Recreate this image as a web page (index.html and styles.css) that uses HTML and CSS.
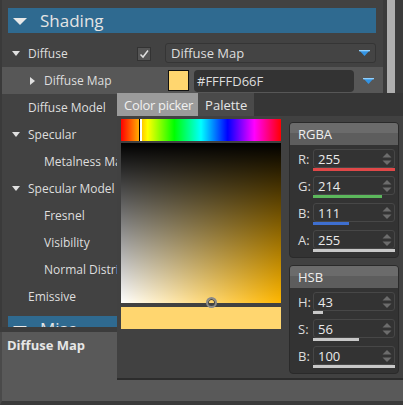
FILE: index.html
```html
<!DOCTYPE html>
<html>
<head>
<meta charset="utf-8">
<link rel="stylesheet" href="styles.css">
</head>
<body>
<div class="app">
  <div class="main">
    <div class="grid">
      <div class="section-header"><span class="tri-lg"></span>Shading</div>
      <div class="row lvl1">
        <div class="name"><span class="twisty"><span class="tri-down"></span></span><span>Diffuse</span></div>
        <div class="value">
          <span class="checkbox"><svg width="12" height="12" viewBox="0 0 12 12"><polyline points="2.5,6.5 5,9 10,2.5" fill="none" stroke="#e0e0e0" stroke-width="1.5"/></svg></span>
          <div class="dropdown"><span>Diffuse Map</span><svg class="blue-arrow" width="11" height="6" viewBox="0 0 11 6"><polygon points="0,0 11,0 5.5,6" fill="#3394e4"/><rect x="0" y="0" width="11" height="1.3" fill="#8fd0ff"/></svg></div>
        </div>
      </div>
      <div class="row lvl2 selected">
        <div class="name"><span class="twisty"><span class="tri-right"></span></span><span>Diffuse Map</span></div>
        <div class="value">
          <span class="swatch"></span>
          <div class="hexbox">#FFFFD66F</div>
          <div class="arrow-cell"><svg class="blue-arrow" width="11" height="6" viewBox="0 0 11 6"><polygon points="0,0 11,0 5.5,6" fill="#3394e4"/><rect x="0" y="0" width="11" height="1.3" fill="#8fd0ff"/></svg></div>
        </div>
      </div>
      <div class="row lvl1"><div class="name"><span class="twisty"></span><span>Diffuse Model</span></div><div class="value"></div></div>
      <div class="row lvl1"><div class="name"><span class="twisty"><span class="tri-down"></span></span><span>Specular</span></div><div class="value"></div></div>
      <div class="row lvl2"><div class="name"><span class="twisty"></span><span>Metalness Map</span></div><div class="value"></div></div>
      <div class="row lvl1"><div class="name"><span class="twisty"><span class="tri-down"></span></span><span>Specular Model</span></div><div class="value"></div></div>
      <div class="row lvl2"><div class="name"><span class="twisty"></span><span>Fresnel</span></div><div class="value"></div></div>
      <div class="row lvl2"><div class="name"><span class="twisty"></span><span>Visibility</span></div><div class="value"></div></div>
      <div class="row lvl2"><div class="name"><span class="twisty"></span><span>Normal Distribution</span></div><div class="value"></div></div>
      <div class="row lvl1"><div class="name"><span class="twisty"></span><span>Emissive</span></div><div class="value"></div></div>
      <div class="section-header next"><span class="tri-lg"></span>Misc</div>
    </div>
    <div class="scrollbar"><div class="thumb"></div></div>
  </div>
  <div class="sep"></div>
  <div class="desc">Diffuse Map</div>

  <div class="popup">
    <div class="tabs">
      <div class="tab active">Color picker</div>
      <div class="tab">Palette</div>
    </div>
    <div class="popup-body">
      <div class="picker">
        <div class="hue"><span class="hue-marker"></span></div>
        <div class="sv"><span class="sv-marker"></span></div>
        <div class="preview"></div>
      </div>
      <div class="channels">
        <div class="group">
          <div class="group-header">RGBA</div>
          <div class="group-body">
            <div class="ch"><span class="lbl">R:</span><div class="field"><div class="box"><span>255</span><svg class="spin" width="10" height="14" viewBox="0 0 10 14"><polygon points="0.5,5.5 9.5,5.5 5,1" fill="#6c6c6c"/><polygon points="0.5,8.5 9.5,8.5 5,13" fill="#6c6c6c"/></svg></div><div class="bar red" style="width:82px"></div></div></div>
            <div class="ch"><span class="lbl">G:</span><div class="field"><div class="box"><span>214</span><svg class="spin" width="10" height="14" viewBox="0 0 10 14"><polygon points="0.5,5.5 9.5,5.5 5,1" fill="#6c6c6c"/><polygon points="0.5,8.5 9.5,8.5 5,13" fill="#6c6c6c"/></svg></div><div class="bar green" style="width:69px"></div></div></div>
            <div class="ch"><span class="lbl">B:</span><div class="field"><div class="box"><span>111</span><svg class="spin" width="10" height="14" viewBox="0 0 10 14"><polygon points="0.5,5.5 9.5,5.5 5,1" fill="#6c6c6c"/><polygon points="0.5,8.5 9.5,8.5 5,13" fill="#6c6c6c"/></svg></div><div class="bar blue" style="width:36px"></div></div></div>
            <div class="ch"><span class="lbl">A:</span><div class="field"><div class="box"><span>255</span><svg class="spin" width="10" height="14" viewBox="0 0 10 14"><polygon points="0.5,5.5 9.5,5.5 5,1" fill="#6c6c6c"/><polygon points="0.5,8.5 9.5,8.5 5,13" fill="#6c6c6c"/></svg></div><div class="bar gray" style="width:82px"></div></div></div>
          </div>
        </div>
        <div class="group hsb">
          <div class="group-header">HSB</div>
          <div class="group-body">
            <div class="ch"><span class="lbl">H:</span><div class="field"><div class="box"><span>43</span><svg class="spin" width="10" height="14" viewBox="0 0 10 14"><polygon points="0.5,5.5 9.5,5.5 5,1" fill="#6c6c6c"/><polygon points="0.5,8.5 9.5,8.5 5,13" fill="#6c6c6c"/></svg></div><div class="bar gray" style="width:10px"></div></div></div>
            <div class="ch"><span class="lbl">S:</span><div class="field"><div class="box"><span>56</span><svg class="spin" width="10" height="14" viewBox="0 0 10 14"><polygon points="0.5,5.5 9.5,5.5 5,1" fill="#6c6c6c"/><polygon points="0.5,8.5 9.5,8.5 5,13" fill="#6c6c6c"/></svg></div><div class="bar gray" style="width:46px"></div></div></div>
            <div class="ch"><span class="lbl">B:</span><div class="field"><div class="box"><span>100</span><svg class="spin" width="10" height="14" viewBox="0 0 10 14"><polygon points="0.5,5.5 9.5,5.5 5,1" fill="#6c6c6c"/><polygon points="0.5,8.5 9.5,8.5 5,13" fill="#6c6c6c"/></svg></div><div class="bar gray" style="width:82px"></div></div></div>
          </div>
        </div>
      </div>
    </div>
  </div>
</div>
</body>
</html>
```

FILE: styles.css
```css
* { box-sizing: border-box; }
html, body { margin: 0; padding: 0; }
body {
  width: 403px;
  height: 405px;
  overflow: hidden;
  background: #3a3a3a;
  font-family: "Open Sans", "Noto Sans", sans-serif;
  font-size: 12px;
  color: #dedede;
}
.app {
  position: relative;
  width: 403px;
  height: 405px;
  display: flex;
  flex-direction: column;
}
.main {
  display: flex;
  height: 327px;
  overflow: hidden;
}
.grid {
  width: 383px;
  background: #424242;
  border-left: 2px solid #3a3a3a;
  overflow: hidden;
}
.section-header {
  height: 25px;
  margin: 8px 7px 7px 6px;
  background: #2f6a90;
  color: #e4e4e4;
  font-size: 17px;
  display: flex;
  align-items: center;
  padding-left: 5px;
  white-space: nowrap;
}
.section-header.next { margin-top: 6px; }
.tri-lg {
  width: 0; height: 0;
  border-left: 7px solid transparent;
  border-right: 7px solid transparent;
  border-top: 7px solid #e8e8e8;
  margin-right: 13px;
  margin-top: 1px;
}
.row {
  height: 27px;
  display: flex;
  align-items: center;
}
.row.selected { background: #575757; }
.name {
  width: 133px;
  flex: none;
  display: flex;
  align-items: center;
  white-space: nowrap;
  overflow: hidden;
  padding-left: 10px;
}
.lvl2 .name { padding-left: 26px; }
.twisty {
  width: 16px;
  flex: none;
  display: flex;
  align-items: center;
}
.tri-down {
  width: 0; height: 0;
  border-left: 4.5px solid transparent;
  border-right: 4.5px solid transparent;
  border-top: 5px solid #e0e0e0;
}
.tri-right {
  width: 0; height: 0;
  border-top: 4.5px solid transparent;
  border-bottom: 4.5px solid transparent;
  border-left: 5px solid #e0e0e0;
  margin-left: 2px;
}
.value {
  flex: 1;
  display: flex;
  align-items: center;
  padding-right: 7px;
  height: 100%;
}
.checkbox {
  width: 14px;
  height: 14px;
  margin-left: 2px;
  background: #555;
  border: 1px solid #333;
  display: flex;
  align-items: center;
  justify-content: center;
}
.dropdown {
  flex: 1;
  height: 20px;
  margin-left: 14px;
  margin-top: -1px;
  background: #444;
  border: 1px solid #353535;
  border-radius: 3px;
  display: flex;
  align-items: center;
  justify-content: space-between;
  padding: 0 5px 0 5px;
  font-size: 13px;
}
.swatch {
  width: 21px;
  height: 21px;
  margin-left: 33px;
  background: #ffd66f;
  border: 1px solid #111;
}
.hexbox {
  width: 160px;
  height: 22px;
  margin-left: 5px;
  background: #333;
  border-radius: 4px;
  display: flex;
  align-items: center;
  padding-left: 3px;
  font-size: 13px;
}
.arrow-cell {
  flex: 1;
  display: flex;
  align-items: center;
  padding-left: 9px;
}
.scrollbar {
  width: 20px;
  background: #3b3b3b;
  padding-left: 4px;
}
.thumb {
  width: 8px;
  height: 93px;
  background: #afafaf;
}
.sep {
  height: 5px;
  background: #3c3c3c;
}
.desc {
  flex: 1;
  background: #595959;
  border-left: 2px solid #4a4a4a;
  border-bottom: 4px solid #3a3a3a;
  padding: 4px 0 0 5px;
  font-weight: bold;
  font-size: 13px;
  color: #e6e6e6;
}
/* popup */
.popup {
  position: absolute;
  left: 117px;
  top: 93px;
  width: 286px;
  height: 287px;
  background: #414141;
  border-bottom: 2px solid #2c2c2c;
}
.tabs {
  height: 23px;
  background: #363636;
  display: flex;
}
.tab {
  display: flex;
  align-items: center;
  padding: 0 7px;
  font-size: 13px;
  white-space: nowrap;
  background: #4a4a4a;
  color: #e6e6e6;
}
.tab.active {
  padding: 0 5px 0 7px;
  letter-spacing: -0.3px;
  background: #9b9b9b;
  color: #f0f0f0;
}
.popup-body {
  display: flex;
  padding: 3px 0 0 4px;
}
.picker {
  width: 160px;
  display: flex;
  flex-direction: column;
}
.hue {
  position: relative;
  height: 22px;
  background: linear-gradient(to right, #f00, #ff0, #0f0, #0ff, #00f, #f0f, #f00);
}
.hue-marker {
  position: absolute;
  left: 18px;
  top: 0;
  width: 3px;
  height: 22px;
  background: #fff;
  border-left: 1px solid #000;
}
.sv {
  position: relative;
  height: 160px;
  margin-top: 2px;
  background:
    linear-gradient(to bottom, #000, rgba(0,0,0,0)),
    linear-gradient(to right, #fff, rgba(255,255,255,0)),
    #ffb700;
}
.sv-marker {
  position: absolute;
  left: 85px;
  top: 154px;
  width: 11px;
  height: 11px;
  border-radius: 50%;
  border: 2px solid #8a8a8a;
  box-shadow: inset 0 0 0 1px #444;
}
.preview {
  height: 22px;
  margin-top: 4px;
  background: #ffd66f;
}
.channels {
  width: 110px;
  margin-left: 8px;
  padding-top: 3px;
}
.group {
  background: #333;
  border: 1px solid #2a2a2a;
  border-radius: 4px;
  overflow: hidden;
}
.group.hsb { margin-top: 7px; }
.group-header {
  height: 22px;
  background: linear-gradient(#6b6b6b 0, #6b6b6b 45%, #5d5d5d 45%, #5d5d5d 100%);
  display: flex;
  align-items: center;
  padding-left: 8px;
  font-size: 13px;
  color: #eee;
}
.group-body {
  padding: 4px 3px 5px 8px;
  display: flex;
  flex-direction: column;
  gap: 5px;
}
.ch {
  display: flex;
}
.lbl {
  width: 15px;
  height: 19px;
  display: flex;
  align-items: center;
  font-size: 13px;
  color: #dcdcdc;
}
.field { width: 82px; }
.box {
  height: 19px;
  border: 1px solid #474747;
  border-radius: 3px;
  display: flex;
  align-items: center;
  padding-left: 4px;
  font-size: 13px;
  color: #eaeaea;
}
.spin { margin-left: auto; margin-right: 2px; }
.bar { height: 3px; }
.bar.red { background: #e04848; }
.bar.green { background: #5cb85c; }
.bar.blue { background: #3e6fd0; }
.bar.gray { background: #c8c8c8; }
```
